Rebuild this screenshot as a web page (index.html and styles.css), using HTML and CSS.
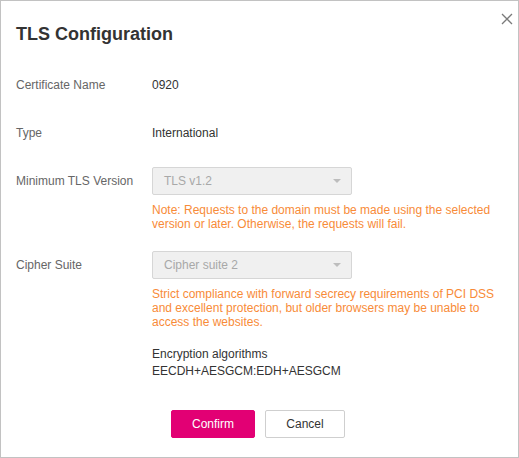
FILE: index.html
```html
<!DOCTYPE html>
<html>
<head>
<meta charset="utf-8">
<link rel="stylesheet" href="styles.css">
</head>
<body>
<div class="dialog">
  <button class="close" aria-label="Close">
    <svg width="12" height="12" viewBox="0 0 12 12"><path d="M1 1 L11 11 M11 1 L1 11" stroke="#7a7a7a" stroke-width="1.3" fill="none"/></svg>
  </button>
  <h1 class="title">TLS Configuration</h1>
  <div class="form">
    <div class="row">
      <div class="label">Certificate Name</div>
      <div class="field"><div class="value">0920</div></div>
    </div>
    <div class="row">
      <div class="label">Type</div>
      <div class="field"><div class="value">International</div></div>
    </div>
    <div class="row">
      <div class="label">Minimum TLS Version</div>
      <div class="field">
        <div class="select"><span>TLS v1.2</span><i class="caret"></i></div>
        <p class="note">Note: Requests to the domain must be made using the selected version or later. Otherwise, the requests will fail.</p>
      </div>
    </div>
    <div class="row">
      <div class="label">Cipher Suite</div>
      <div class="field">
        <div class="select"><span>Cipher suite 2</span><i class="caret"></i></div>
        <p class="note">Strict compliance with forward secrecy requirements of PCI DSS and excellent protection, but older browsers may be unable to access the websites.</p>
        <div class="algo">
          <div>Encryption algorithms</div>
          <div>EECDH+AESGCM:EDH+AESGCM</div>
        </div>
      </div>
    </div>
  </div>
  <div class="actions">
    <button class="btn primary">Confirm</button>
    <button class="btn">Cancel</button>
  </div>
</div>
</body>
</html>
```

FILE: styles.css
```css
* { box-sizing: border-box; }
html, body { margin: 0; padding: 0; background: #fff; }
body { font-family: "Liberation Sans", Arial, sans-serif; font-size: 12px; color: #333; }

.dialog {
  position: relative;
  width: 519px;
  height: 458px;
  border: 1px solid #c2c2c2;
  padding: 21px 0 0 15px;
}

.close {
  position: absolute;
  top: 12px;
  right: 5px;
  width: 12px;
  height: 12px;
  padding: 0;
  border: 0;
  background: none;
  display: flex;
}

.title {
  margin: 0;
  font-size: 18px;
  font-weight: bold;
  line-height: 24px;
  color: #333;
}

.form {
  margin-top: 25px;
  display: flex;
  flex-direction: column;
  gap: 20px;
}

.row { display: flex; }
.label {
  width: 136px;
  flex: none;
  line-height: 28px;
  color: #666;
}
.field { width: 342px; }
.value { line-height: 28px; color: #333; }

.select {
  width: 200px;
  height: 28px;
  border: 1px solid #d6d6d6;
  border-radius: 2px;
  background: #f0f0f0;
  color: #a8a8a8;
  font-size: 12px;
  display: flex;
  align-items: center;
  justify-content: space-between;
  padding: 0 10px 0 11px;
}
.caret {
  width: 0;
  height: 0;
  border-left: 4px solid transparent;
  border-right: 4px solid transparent;
  border-top: 4px solid #bdbdbd;
}

.note {
  margin: 8px 0 0;
  line-height: 14px;
  color: #f88b38;
  width: 345px;
}

.algo {
  margin-top: 17px;
  line-height: 17px;
  color: #333;
}

.actions {
  margin-top: 30px;
  display: flex;
  justify-content: center;
  gap: 10px;
  padding-right: 18px;
}
.btn {
  height: 28px;
  width: 80px;
  border: 1px solid #cfcfcf;
  border-radius: 2px;
  background: #fff;
  color: #333;
  font-family: "Liberation Sans", Arial, sans-serif;
  font-size: 12px;
  padding: 0;
}
.btn.primary {
  width: 84px;
  background: #e20074;
  border-color: #e20074;
  color: #fff;
}
```
